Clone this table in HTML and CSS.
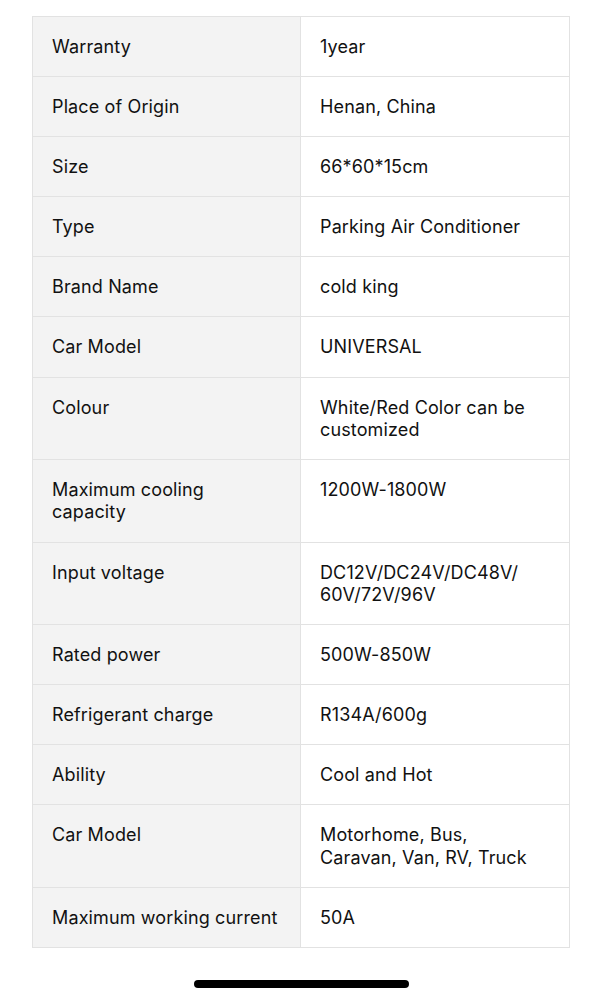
FILE: index.html
```html
<!DOCTYPE html>
<html>
<head>
<meta charset="utf-8">
<link rel="stylesheet" href="styles.css">
</head>
<body>
<div class="page">
<table class="specs">
<tr><th>Warranty</th><td>1year</td></tr>
<tr><th>Place of Origin</th><td>Henan, China</td></tr>
<tr><th>Size</th><td>66*60*15cm</td></tr>
<tr><th>Type</th><td>Parking Air Conditioner</td></tr>
<tr><th>Brand Name</th><td>cold king</td></tr>
<tr><th>Car Model</th><td>UNIVERSAL</td></tr>
<tr><th>Colour</th><td>White/Red Color can be<br>customized</td></tr>
<tr><th>Maximum cooling<br>capacity</th><td>1200W-1800W</td></tr>
<tr><th>Input voltage</th><td>DC12V/DC24V/DC48V/<br>60V/72V/96V</td></tr>
<tr><th>Rated power</th><td>500W-850W</td></tr>
<tr><th>Refrigerant charge</th><td>R134A/600g</td></tr>
<tr><th>Ability</th><td>Cool and Hot</td></tr>
<tr><th>Car Model</th><td>Motorhome, Bus,<br>Caravan, Van, RV, Truck</td></tr>
<tr><th>Maximum working current</th><td>50A</td></tr>
</table>
<div class="home-bar"></div>
</div>
</body>
</html>
```
FILE: styles.css
```css
html, body {
  margin: 0;
  padding: 0;
  background: #ffffff;
}
.page {
  width: 602px;
  height: 999px;
  display: flex;
  flex-direction: column;
  align-items: flex-start;
  padding: 16px 0 0 32px;
  box-sizing: border-box;
}
.specs {
  border-collapse: collapse;
  width: 538px;
  table-layout: fixed;
  font-family: Inter, "Noto Sans", sans-serif;
  font-size: 18px;
  line-height: 22.4px;
  letter-spacing: 0.13px;
  color: #111111;
}
.specs th, .specs td {
  border: 1px solid #e2e2e2;
  padding: 19px 19px 17.7px 19px;
  text-align: left;
  vertical-align: top;
  font-weight: 400;
}
.specs th {
  width: 229px;
  background: #f3f3f3;
}
.specs td {
  background: #ffffff;
}
.home-bar {
  margin-top: 32px;
  margin-left: 162px;
  width: 215px;
  height: 8px;
  border-radius: 4px;
  background: #000000;
}
```
